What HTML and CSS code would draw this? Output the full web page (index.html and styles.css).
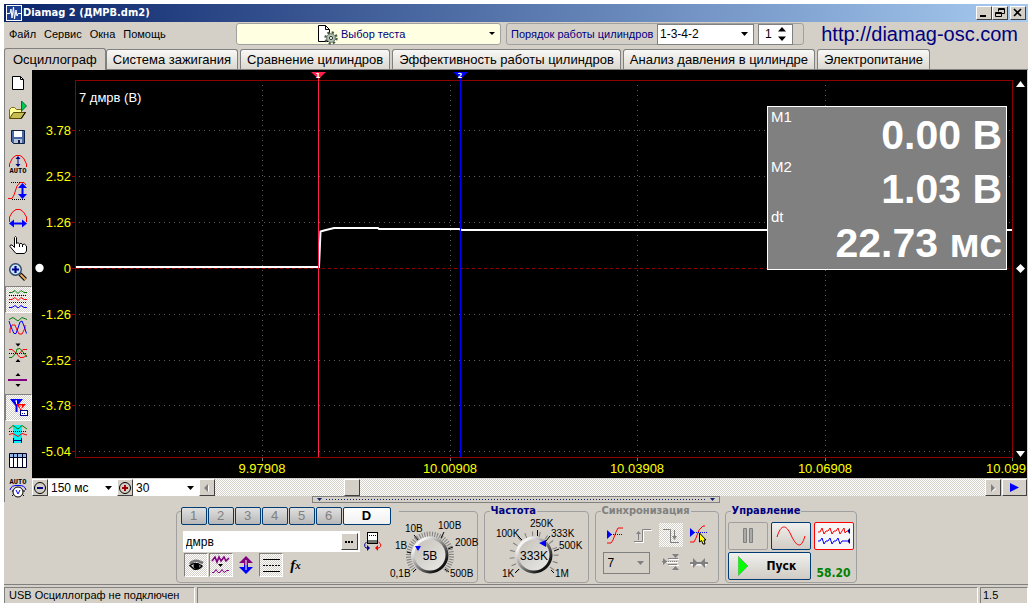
FILE: index.html
```html
<!DOCTYPE html>
<html lang="ru">
<head>
<meta charset="utf-8">
<title>Diamag 2 (ДМРВ.dm2)</title>
<link rel="stylesheet" href="styles.css">
</head>
<body>
<div class="window">
  <header class="titlebar">
    <svg class="app-icon" width="16" height="16" viewBox="0 0 16 16"><rect width="16" height="16" fill="#fff"/><rect x="1" y="1" width="14" height="14" fill="#1c3f94"/><path d="M1 8.500H4L5 4L6 13L7.500 2L8.500 14L10 5L11 11L12 8.500H15" fill="none" stroke="#fff"/></svg>
    <h1 class="title">Diamag 2 (ДМРВ.dm2)</h1>
    <div class="win-buttons">
      <button class="win-btn" aria-label="Свернуть"><svg width="12" height="10"><rect x="2" y="7" width="6" height="2"/></svg></button>
      <button class="win-btn" aria-label="Восстановить"><svg width="12" height="10" fill="none" stroke="#000"><path d="M4.500 3.500V.5H10.500V5.500H8M4 1.500H11M1.500 4.500H7.500V8.500H1.500ZM1 5.500H8"/></svg></button>
      <button class="win-btn win-close" aria-label="Закрыть"><svg width="12" height="10" stroke="#000" stroke-width="1.600"><path d="M2 1L9 8M9 1L2 8"/></svg></button>
    </div>
  </header>

  <div class="menu-row">
    <nav class="menu">
      <button class="menu-item">Файл</button>
      <button class="menu-item">Сервис</button>
      <button class="menu-item">Окна</button>
      <button class="menu-item">Помощь</button>
    </nav>
    <div class="combo test-combo">
      <svg class="test-icon" width="21" height="20" viewBox="0 0 21 20"><path d="M1.500.5H8.500L12.500 4.500V16.500H1.500Z" fill="#fff" stroke="#000"/><path d="M8.500.5V4.500H12.500" fill="none" stroke="#000"/><circle cx="14" cy="13" r="5.500" fill="none" stroke="#4a5a4a" stroke-width="2.400" stroke-dasharray="2.200 2.120"/><circle cx="14" cy="13" r="4.300" fill="#b4c4b4" stroke="#6a7a6a"/><circle cx="14" cy="13" r="1.600" fill="#fff" stroke="#333"/></svg>
      <select class="test-select" aria-label="Выбор теста"><option>Выбор теста</option></select>
      <svg class="arrow" width="6" height="3"><path d="M0 0H6L3 3Z"/></svg>
    </div>
    <div class="order">
      <label class="order-label" for="order">Порядок работы цилиндров</label>
      <span class="combo order-combo">
        <select id="order" class="order-select"><option>1-3-4-2</option></select>
        <svg class="arrow" width="7" height="4"><path d="M0 0H7L3.500 4Z"/></svg>
      </span>
      <span class="spin">
        <input class="spin-input" type="text" value="1" aria-label="Номер цилиндра">
        <svg class="spin-arrows" width="8" height="14"><path d="M0 4.500L4 0L8 4.500ZM0 9.500L4 14L8 9.500Z"/></svg>
      </span>
    </div>
    <a class="site" href="#">http://diamag-osc.com</a>
  </div>

  <nav class="tabs" role="tablist">
    <button class="tab active" role="tab" aria-selected="true">Осциллограф</button>
    <button class="tab" role="tab">Система зажигания</button>
    <button class="tab" role="tab">Сравнение цилиндров</button>
    <button class="tab" role="tab">Эффективность работы цилиндров</button>
    <button class="tab" role="tab">Анализ давления в цилиндре</button>
    <button class="tab" role="tab">Электропитание</button>
  </nav>

  <main class="main">
    <div class="toolbar">
      <button class="tool" aria-label="Новый"><svg viewBox="0 0 20 20"><path d="M4.500 3.500H12.500L15.500 6.500V16.500H4.500Z" fill="#fff" stroke="#000"/><path d="M12.500 3.500V6.500H15.500" fill="none" stroke="#000"/></svg></button>
      <button class="tool" aria-label="Открыть"><svg viewBox="0 0 20 20"><path d="M1.500 18V9.500L3.500 7.500H6.500L8.500 9.500H13.500V12" fill="#ffff9c" stroke="#7b6b10"/><path d="M1.500 18.500L5.500 12.500H17.500L13.500 18.500Z" fill="#c6bd52" stroke="#5a4a00"/><path d="M13 18.500L17.500 12" stroke="#000" fill="none"/><path d="M13.500 11V1L18.500 6Z" fill="#0c4" stroke="#064"/></svg></button>
      <button class="tool" aria-label="Сохранить"><svg viewBox="0 0 20 20"><path d="M3.500 3.500H16.500V16.500H5.500L3.500 14.500Z" fill="#4868a8" stroke="#102040"/><path d="M6 4H14V10H6Z" fill="#fff"/><path d="M6 12H14V16H6Z" fill="#b8c4dc"/><path d="M10 13H12V16H10Z" fill="#102040"/></svg></button>
      <button class="tool" aria-label="Авто амплитуда"><svg viewBox="0 0 20 20"><path d="M1.500 13V10L4.500 4L8 1.500H12L15.500 4L18.500 10V13" fill="none" stroke="red"/><path d="M10 4V12" stroke="#008"/><path d="M7.500 5L10 2L12.500 5ZM7.500 10L10 13L12.500 10Z" fill="#008"/><text class="micro" x="10" y="19">AUTO</text></svg></button>
      <button class="tool" aria-label="Амплитуда"><svg viewBox="0 0 20 20"><path d="M0 17.500H4L6 14L9 5L12 1.500H16L18 4" fill="none" stroke="red"/><path d="M3 1.500H12M4 18.500H18" stroke="#000" stroke-dasharray="1 1"/><path d="M14.500 4V16" stroke="#00f" stroke-width="2"/><path d="M10 7L14.500 2L19 7ZM10 13L14.500 18L19 13Z" fill="#00f"/></svg></button>
      <button class="tool" aria-label="Ширина"><svg viewBox="0 0 20 20"><path d="M1.500 14V9L4.500 4L8 1.500H12L15.500 4L18.500 9V14" fill="none" stroke="red"/><path d="M4 15.500H16" stroke="#00f" stroke-width="2"/><path d="M6 11.500L1 15.500L6 19.500ZM14 11.500L19 15.500L14 19.500Z" fill="#00f"/></svg></button>
      <button class="tool" aria-label="Рука"><svg viewBox="0 0 20 20"><path d="M6.500 12.500V2.500Q7.500 .5 8.500 2.500V8.500Q10 6.500 11.500 9Q13 7 14.500 9.500Q16.500 8 18.500 11V16L16.500 18.500H8L2 11.500Q1.500 9.500 4 10Z" fill="#fff" stroke="#000"/><path d="M11.500 9V12M14.500 9.500V12" stroke="#000"/></svg></button>
      <button class="tool" aria-label="Лупа"><svg viewBox="0 0 20 20"><path d="M12 12L17.500 17.500" stroke="#000" stroke-width="4"/><path d="M12.500 12.500L17.500 17.500" stroke="#e8b060" stroke-width="2"/><circle cx="7.500" cy="7.500" r="5.800" fill="#c0e8ff" stroke="#346" stroke-width="1.400"/><path d="M7.500 4V11M4 7.500H11" stroke="#008" stroke-width="2.200"/></svg></button>
      <button class="tool pressed" aria-label="Раздельно"><svg viewBox="0 0 20 20" fill="none"><path d="M1 3.500H4L7 1.500L10 4.500L13 1.500L16 3.500H19" stroke="green"/><path d="M1 6.500H19M1 13.500H19" stroke="#000" stroke-dasharray="1 1"/><path d="M1 10.500H4L7 8.500L10 11.500L13 8.500L16 10.500H19" stroke="red"/><path d="M1 18.500H4L7 16.500L10 19L13 16.500L16 18.500H19" stroke="#00f"/></svg></button>
      <button class="tool" aria-label="Наложение"><svg viewBox="0 0 20 20" fill="none"><path d="M1 3.500L5 1.500L10 5L14 1.500L19 3.500" stroke="green"/><path d="M2 17V13L4 9H7L9 14L11 18H14L17 12V9" stroke="red"/><path d="M1 5L3 11L6 17.500H8L10 12L12 6L14 5L16 10L18.500 17.500" stroke="#00f"/></svg></button>
      <button class="tool" aria-label="Инверсия"><svg viewBox="0 0 20 20" fill="none"><path d="M7.500.5H12.500L10 3.500ZM7.500 19L10 16L12.500 19Z" fill="#000"/><path d="M1 6.500H4L8 10L12 14.500H15L19 12.500" stroke="red"/><path d="M1 14.500H4L8 10L9 6L12 5.500L15 9L19 14" stroke="green"/><path d="M11 11L15 6.500H19" stroke="red"/><path d="M1 10.500H19" stroke="#000" stroke-dasharray="1 1"/></svg></button>
      <button class="tool" aria-label="Центр"><svg viewBox="0 0 20 20"><path d="M7.500 6L10 3L12.500 6ZM7.500 14H12.500L10 17Z"/><path d="M0 10H19" stroke="#800080" stroke-width="2"/></svg></button>
      <button class="tool pressed" aria-label="Маркеры"><svg viewBox="0 0 20 20"><path d="M2 2H15L9.500 9V15H7.500V9Z" fill="#00f"/><path d="M8 7H18L13.500 12V17H12V12Z" fill="red"/><path d="M7 4.500L8.500 3.500V7M11 9H14L12 11H14" stroke="#fff" fill="none"/><rect x="12.500" y="13.500" width="7" height="5" fill="#fff" stroke="#008"/><path d="M14 16.500H18" stroke="#008" stroke-dasharray="1 1"/></svg></button>
      <button class="tool" aria-label="Фрагмент"><svg viewBox="0 0 20 20" fill="none"><rect x="5" y="1" width="9" height="18" fill="#00f0f8"/><path d="M1 5L5 1.500L10 5L14 1.500L19 5" stroke="green"/><path d="M1 7.500H19" stroke="#000" stroke-dasharray="1 1"/><path d="M1 10.500L5 9.500L10 12.500L14 9.500L19 11" stroke="red"/><path d="M5.500 14V19M13.500 14V19M6 16.500H13" stroke="#008"/></svg></button>
      <button class="tool" aria-label="Таблица"><svg viewBox="0 0 20 20"><path d="M1.500 2.500H18.500V16.500H1.500Z" fill="#fff" stroke="#002"/><path d="M2 3H18V6H2Z" fill="#90b8e8"/><path d="M2 6.500H18M5.500 3V16M9.500 3V16M14.500 3V16" stroke="#002"/></svg></button>
      <button class="tool" aria-label="Авто вольтметр"><svg viewBox="0 0 20 20"><text class="micro" x="10" y="6">AUTO</text><circle cx="10" cy="14" r="5" fill="#fff" stroke="#000"/><path d="M8 12L10 16L12 12M2 12Q3 7 10 7.500Q17 7 18 12" fill="none" stroke="#00f"/><path d="M4 18L5.500 16.500M16 18L14.500 16.500M4 13H5M15 13H17" stroke="#000"/></svg></button>
    </div>

    <div class="workspace">
      <div class="chart">
        <svg class="plot" viewBox="0 0 995 408">
          <g class="grid">
            <path d="M47 60.500H980M47 106.500H980M47 152.500H980M47 244.500H980M47 290.500H980M47 335.500H980M47 381.500H980"/>
            <path d="M230.500 15V387M418.500 15V387M605.500 15V387M793.500 15V387"/>
          </g>
          <path class="frame" d="M43.500 10.500H980.500V387.500H43.500ZM40 60.500H43M40 106.500H43M40 152.500H43M40 198.500H43M40 244.500H43M40 290.500H43M40 335.500H43M40 381.500H43"/>
          <path class="zero" d="M44 198.500H980"/>
          <path class="ticks" d="M230.500 388V391M418.500 388V391M605.500 388V391M793.500 388V391M980.500 388V391"/>
          <path class="signal" d="M44 197H287L288.500 161.500L292 160.500L302 158H346L347 159H427L430 160H980"/>
          <path d="M286.500 8V387" stroke="#ff2050"/><path d="M279 2H294L286.500 9Z" fill="#ff2050"/>
          <path d="M428.500 8V387" stroke="#00f"/><path d="M421 2H436L428.500 9Z" fill="#00f"/>
          <g class="marker-labels"><text x="286" y="8">1</text><text x="428" y="8">2</text></g>
          <g class="y-labels"><text x="39" y="65">3.78</text><text x="39" y="111">2.52</text><text x="39" y="157">1.26</text><text x="39" y="203">0</text><text x="39" y="249">-1.26</text><text x="39" y="295">-2.52</text><text x="39" y="340">-3.78</text><text x="39" y="386">-5.04</text></g>
          <g class="x-labels"><text x="230" y="403">9.97908</text><text x="418" y="403">10.00908</text><text x="605" y="403">10.03908</text><text x="793" y="403">10.06908</text><text x="974" y="403">10.099</text></g>
          <text class="channel" x="47" y="32">7 дмрв (В)</text>
          <path d="M984 17L988.500 11L993 17ZM984 381H993L988.500 387ZM988.500 194L993 198.500L988.500 203L984 198.500Z" fill="#fff"/>
          <circle cx="7.500" cy="198" r="4.200" fill="#fff"/>
        </svg>
        <div class="readout">
          <div class="readout-names"><span>M1</span><span>M2</span><span>dt</span></div>
          <div class="readout-values"><span>0.00 В</span><span>1.03 В</span><span>22.73 мс</span></div>
        </div>
      </div>
      <div class="scroll-row">
        <button class="raised zoom-btn" aria-label="Уменьшить"><svg width="14" height="14"><circle cx="7" cy="7" r="5.500" fill="none" stroke="#000"/><path d="M4 7H10" stroke="#008" stroke-width="2"/></svg></button>
        <span class="combo time-combo"><select class="flat-select" aria-label="Развёртка"><option>150 мс</option></select><svg class="arrow" width="7" height="4"><path d="M0 0H7L3.500 4Z"/></svg></span>
        <button class="raised zoom-btn" aria-label="Увеличить"><svg width="14" height="14"><circle cx="7" cy="7" r="5.500" fill="none" stroke="#000"/><path d="M4 7H10M7 4V10" stroke="#a00000" stroke-width="2"/></svg></button>
        <span class="combo scale-combo"><select class="flat-select" aria-label="Масштаб"><option>30</option></select><svg class="arrow" width="7" height="4"><path d="M0 0H7L3.500 4Z"/></svg></span>
        <button class="raised zoom-btn" aria-label="Влево"><svg width="8" height="8"><path d="M6 1V8L2 4.500Z" fill="#fff"/><path d="M5 0V8L1 4Z" fill="#808080"/></svg></button>
        <input class="scroll" type="range" min="0" max="1000" value="171" aria-label="Прокрутка">
        <button class="raised zoom-btn" aria-label="Вправо"><svg width="8" height="8"><path d="M3 1V8L7 5Z" fill="#fff"/><path d="M2 0V8L6 4Z" fill="#808080"/></svg></button>
        <button class="raised play-btn" aria-label="Воспроизвести"><svg width="9" height="9"><path d="M0 0L9 4.500L0 9Z" fill="#00f"/></svg></button>
      </div>
    </div>
  </main>

  <div class="splitter"><svg width="5" height="3"><path d="M0 0H5L2.500 3Z"/></svg><span class="dots"></span><svg width="5" height="3"><path d="M0 0H5L2.500 3Z"/></svg></div>

  <section class="panel">
    <div class="group channel-group">
      <div class="channel-left">
        <div class="channels">
          <button class="ch">1</button><button class="ch">2</button><button class="ch">3</button><button class="ch">4</button><button class="ch">5</button><button class="ch">6</button><button class="ch digital">D</button>
        </div>
        <div class="name-row">
          <div class="name-box"><input class="name-input" type="text" value="дмрв" aria-label="Название канала"><button class="raised more" aria-label="Выбрать"><svg width="8" height="2"><path d="M0 0H2V2H0ZM3 0H5V2H3ZM6 0H8V2H6Z"/></svg></button></div>
          <button class="plain" aria-label="Датчик"><svg width="20" height="20" viewBox="0 0 20 20"><rect x="4.500" y=".5" width="10" height="11" fill="#fff" stroke="#000"/><rect x="5" y="8" width="9" height="3" fill="#707870"/><path d="M6 3.500H13" stroke="#000" stroke-dasharray="1 1"/><path d="M3.500 10Q0 13 3 16H5" fill="none" stroke="#008"/><path d="M4 13L7 16L4 19Z" fill="#008"/><path d="M15.500 10Q20 13 16 16H14" fill="none" stroke="red"/><path d="M15 13L12 16L15 19Z" fill="red"/></svg></button>
        </div>
        <div class="icon-row">
          <button class="toggle on" aria-label="Показать"><svg width="20" height="20" viewBox="0 0 20 20"><path d="M4 9Q7 5 12 6L17 8" stroke="#777" stroke-width="2.500" fill="none"/><path d="M4 10.500Q10 6 16 11Q13 15 8 14Z" fill="#ddd" stroke="#000" stroke-width="1.400"/><circle cx="10.500" cy="11" r="3" fill="#000"/></svg></button>
          <button class="toggle on" aria-label="Фильтр"><svg width="20" height="20" viewBox="0 0 20 20"><path d="M1 6L4 2L6 7L8 2L10 6L13 2L15 6L18 3" stroke="#800080" stroke-width="1.600" fill="none"/><path d="M1 17.500H3L5 14.500L7 17.500H9L11 14.500L13 17.500L16 15.500H18" stroke="#800080" fill="none"/><path d="M7 9H12L9.500 12Z"/></svg></button>
          <button class="toggle" aria-label="Смещение"><svg width="20" height="20" viewBox="0 0 20 20"><path d="M10 1L17 8H12V10H8V8H3Z" fill="#800080"/><path d="M10 19L17 12H12V10H8V12H3Z" fill="#00f"/><path d="M10 5V15" stroke="#fff"/></svg></button>
          <button class="toggle on" aria-label="Линии"><svg width="20" height="20" viewBox="0 0 20 20"><path d="M2 4.500H19M2 16.500H19" stroke="#000"/><path d="M2 10.500H19" stroke="#000" stroke-dasharray="2 1"/></svg></button>
          <button class="toggle fx" aria-label="Функция">f<sub>x</sub></button>
        </div>
      </div>
      <svg class="dial" width="92" height="70" viewBox="0 0 92 70">
        <path d="M28 59A21.500 21.500 0 1 1 58 59" fill="none" stroke="#808080" stroke-width="5" stroke-dasharray="1 1.500"/>
        <path d="M29 57L26 60M20 40L24 41M27 23L31 28M57 20L54 26M66 35L61 37M58 57L62 60" stroke="#000"/>
        <use href="#knob" x="43" y="43"/><path d="M28 34H34L31 39Z" fill="#00f"/>
        <text x="3" y="65">0,1В</text><text x="8" y="37">1В</text><text x="18" y="20">10В</text><text x="51" y="17">100В</text><text x="68" y="34">200В</text><text x="63" y="65">500В</text>
        <text class="knob-value" x="43" y="48">5В</text>
      </svg>
    </div>

    <fieldset class="group freq-group">
      <legend>Частота</legend>
      <svg class="dial" width="104" height="65" viewBox="0 5 104 65">
        <defs>
          <linearGradient id="rim" x1="0" y1="0" x2="1" y2="1"><stop offset=".2" stop-color="#f4f4f4"/><stop offset=".5" stop-color="#888"/><stop offset=".8" stop-color="#111"/></linearGradient>
          <linearGradient id="face" x1="0" y1="0" x2="1" y2="1"><stop offset="0" stop-color="#c4c0b8"/><stop offset=".8" stop-color="#e4e2de"/></linearGradient>
          <g id="knob"><circle r="18.500" fill="url(#rim)"/><circle r="15.500" fill="url(#face)"/></g>
        </defs>
        <path d="M33 59A22 22 0 1 1 65 59" fill="none" stroke="#808080" stroke-width="5" stroke-dasharray="1 6"/>
        <path d="M34 57L30 61M33 24L37 28M52.500 18V24M65 24L61 29M74 37L69 39M66 58L69 61" stroke="#000"/>
        <use href="#knob" x="49" y="43"/><path d="M54 31L61 28V35Z" fill="#00f"/>
        <text x="17" y="65">1K</text><text x="11" y="25">100K</text><text x="45" y="15">250K</text><text x="66" y="25">333K</text><text x="74" y="37">500K</text><text x="70" y="65">1M</text>
        <text class="knob-value" x="49" y="48">333K</text>
      </svg>
    </fieldset>

    <fieldset class="group sync-group">
      <legend class="muted">Синхронизация</legend>
      <div class="sync-grid">
        <button class="sync" aria-label="Уровень"><svg width="20" height="20" viewBox="0 0 20 20"><path d="M2 18H6L8 15L11 7L13 3H18" fill="none" stroke="red"/><path d="M2 9.500H18" stroke="#00f" stroke-dasharray="1 1"/><path d="M2 5V14L7 9.500Z" fill="#00f"/></svg></button>
        <button class="sync" aria-label="По фронту" disabled><svg width="20" height="20" viewBox="0 0 20 20"><path d="M2 17.500H10.500V5.500H19" fill="none" stroke="#fff"/><path d="M1 16.500H9.500V4.500H18M5.500 15V8" fill="none" stroke="#808080"/><path d="M3 9L5.500 6L8 9Z" fill="#808080"/></svg></button>
        <button class="sync chosen" aria-label="По спаду"><svg width="20" height="20" viewBox="0 0 20 20"><path d="M2 4.500H9.500V17.500H18M13.500 5V12" fill="none" stroke="#808080"/><path d="M11 11L13.500 15L16 11Z" fill="#808080"/></svg></button>
        <button class="sync" aria-label="Указать"><svg width="20" height="20" viewBox="0 0 20 20"><path d="M1 17H5L7 13L10 5L14 1H16" fill="none" stroke="red"/><path d="M1 7.500H19" stroke="#00f" stroke-dasharray="1 1"/><path d="M1 3V12L6 7.500Z" fill="#00f"/><path d="M10.500 8V17L12.500 15.500L14 19H16L15 15H17Z" fill="#ff0" stroke="#000"/></svg></button>
        <span class="combo sync-combo"><select class="sync-select" aria-label="Канал синхронизации"><option>7</option></select><svg class="arrow" width="7" height="4"><path d="M0 0H7L3.500 4Z" fill="#808080"/></svg></span>
        <button class="sync" aria-label="Гистерезис" disabled><svg width="20" height="20" viewBox="0 0 20 20"><path d="M8 6.500H18M6 9.500H17M8 12.500H18" fill="none" stroke="#fff"/><path d="M7 5.500H17M7 11.500H16M1 8.500H6" stroke="#808080"/><path d="M7 8.500H17" stroke="#808080" stroke-dasharray="1 1"/><path d="M2 5V12L6 8.500ZM11 1H18L14.500 5ZM11 17H18L14.500 13Z" fill="#808080"/></svg></button>
        <button class="sync" aria-label="Сжать" disabled><svg width="20" height="20" viewBox="0 0 20 20"><path d="M2 11.500H18" stroke="#fff" stroke-width="2"/><path d="M1 10H19" stroke="#808080" stroke-width="2"/><path d="M4 5V15L9 10ZM16 5V15L11 10Z" fill="#808080"/></svg></button>
      </div>
    </fieldset>

    <fieldset class="group control-group">
      <legend>Управление</legend>
      <div class="control-grid">
        <button class="ctl" aria-label="Пауза" disabled><svg width="14" height="16"><path d="M2.500.5H5.500V14.500H2.500ZM8.500.5H11.500V14.500H8.500Z" fill="#aaa" stroke="#808080"/></svg></button>
        <button class="ctl blue" aria-label="Синус"><svg width="30" height="20"><path d="M1 11C5 -2 10 -2 15 9S25 24 29 10" fill="none" stroke="red"/></svg></button>
        <button class="ctl red" aria-label="Сигналы"><svg width="34" height="20"><path d="M1 6H3L5 2L7 8L9 5H11L13 2L15 8L17 5H19L21 2L23 8L25 5L27 2L28 7L30 5" fill="none" stroke="red"/><path d="M1 15H3L5 12L7 18L9 15H11L13 12L15 18L17 15H19L21 12L23 18L25 15H30" fill="none" stroke="#00f"/><path d="M33 2V8L30 5ZM33 12V18L30 15Z" fill="#008"/></svg></button>
        <button class="ctl blue start"><svg width="10" height="20"><path d="M0 0L10 10L0 20Z" fill="#0f0" stroke="#8a8"/></svg><span>Пуск</span></button>
        <output class="counter">58.20</output>
      </div>
    </fieldset>
  </section>

  <footer class="status">
    <span class="status-cell status-text">USB Осциллограф не подключен</span>
    <span class="status-cell status-fill"></span>
    <span class="status-cell status-version">1.5</span>
  </footer>
</div>
</body>
</html>
```
FILE: styles.css
```css
* { box-sizing: border-box; }
body {
  margin: 0;
  padding: 4px 4px 5px;
  background: #fff;
  font: 11px/14px "Liberation Sans", Arial, sans-serif;
  color: #000;
}
button, input, select { font: inherit; color: inherit; margin: 0; padding: 0; border: 0; border-radius: 0; background: none; }
button { display: flex; align-items: center; justify-content: center; }
select { appearance: none; }
svg { display: block; flex: none; }

.window { display: flex; flex-direction: column; min-height: calc(100vh - 9px); background: #d4d0c8; }

.titlebar { display: flex; align-items: center; height: 18px; padding: 0 2px; background: linear-gradient(90deg, #0a246a, #a6caf0); }
.title { flex: 1; margin: 0 0 0 1px; font-family: "DejaVu Sans Condensed", "DejaVu Sans", sans-serif; font-size: 11px; color: #fff; }
.win-buttons { display: flex; }
.win-btn { width: 16px; height: 14px; background: #d4d0c8; border: 1px solid; border-color: #fff #404040 #404040 #fff; }
.win-close { margin-left: 2px; }

.menu-row { display: flex; align-items: center; height: 26px; padding: 0 10px 2px 5px; }
.menu { display: flex; gap: 8px; width: 227px; }
.combo { position: relative; display: flex; }
.combo select { width: 100%; }
.arrow { position: absolute; right: 5px; top: calc(50% - 2px); pointer-events: none; }
.test-combo { flex: 0 1 265px; height: 22px; border: 1px solid #a0a0a0; border-radius: 3px; background: #ffffe1; }
.test-select { padding-left: 104px; color: #000080; }
.test-icon { position: absolute; left: 80px; top: 1px; pointer-events: none; }
.order { display: flex; align-items: center; height: 22px; margin-left: 5px; padding: 0 10px 0 4px; border: 1px solid #a0a0a0; border-radius: 3px; }
.order-label { width: 146px; white-space: nowrap; color: #000080; }
.order-combo { width: 97px; height: 21px; border: 1px solid #808080; background: #fff; }
.order-select { padding-left: 2px; font-size: 12px; }
.spin { display: flex; align-items: center; width: 35px; height: 21px; margin-left: 4px; padding: 0 6px; border: 1px solid #808080; background: #fff; }
.spin-input { flex: 1; width: 0; font-size: 12px; }
.site { margin-left: auto; font-size: 20px; line-height: 22px; color: #000080; text-decoration: none; }

.tabs { display: flex; align-items: flex-end; gap: 2px; height: 22px; border-bottom: 1px solid #808080; }
.tab { height: 20px; padding: 0 6px; font-size: 13px; line-height: 18px; white-space: nowrap; border: 1px solid #808080; border-bottom: 0; border-radius: 3px 3px 0 0; background: linear-gradient(#f8f8f6, #dcd8d0); }
.tab.active { height: 22px; margin: 0 -2px -1px 0; padding: 0 8px; background: #d4d0c8; }

.main { display: flex; flex: 1; }
.toolbar { display: flex; flex-direction: column; width: 28px; margin-bottom: -6px; border-left: 1px solid #808080; }
.tool { height: 27px; padding: 0 2px 2px 0; border: 1px solid transparent; }
.tool svg { width: 20px; height: 20px; overflow: visible; }
.pressed, .on { border: 1px solid; border-color: #808080 #fff #fff #808080; }
.pressed, .on, .chosen { background: repeating-conic-gradient(#fff 0 25%, #d4d0c8 0 50%) 0 0 / 2px 2px; }
.micro { font: bold 7px "Liberation Mono", monospace; text-anchor: middle; }
.workspace { display: flex; flex: 1; flex-direction: column; min-width: 0; }

.chart { position: relative; flex: 1; background: #000; margin-right: 1px; }
.plot { width: 100%; height: auto; font-size: 13px; }
.grid path { fill: none; stroke: #5c5c5c; stroke-dasharray: 1 4; }
.frame { fill: none; stroke: #900000; }
.zero { stroke: #900000; stroke-dasharray: 3 3; }
.ticks { stroke: #808080; }
.signal { fill: none; stroke: #fff; stroke-width: 2; }
.marker-labels { fill: #fff; font: bold 7px "DejaVu Sans", sans-serif; text-anchor: middle; }
.y-labels { fill: #ff0; text-anchor: end; }
.x-labels { fill: #ff0; text-anchor: middle; }
.channel { fill: #fff; }
.readout { position: absolute; top: 36px; right: 20px; display: flex; justify-content: space-between; width: 240px; height: 164px; padding: 0 4px 0 3px; border: 1px solid #fff; background: #808080; color: #fff; }
.readout-names { display: flex; flex-direction: column; font-size: 15px; line-height: 20px; gap: 30px; }
.readout-values { display: flex; flex-direction: column; text-align: right; font-size: 41px; line-height: 54px; font-weight: bold; padding-top: 1px; }

.scroll-row { display: flex; height: 18px; margin-right: 1px; padding-top: 1px; }
.raised { border: 1px solid; border-color: #fff #404040 #404040 #fff; background: #d4d0c8; }
.zoom-btn { width: 16px; }
.flat-select { padding-left: 3px; background: #fff; font-size: 12px; }
.time-combo { width: 69px; }
.scale-combo { width: 66px; }
.scroll { flex: 1; min-width: 0; appearance: none; background: repeating-conic-gradient(#fff 0 25%, #d4d0c8 0 50%) 0 0 / 2px 2px; }
.scroll::-webkit-slider-thumb { appearance: none; width: 16px; height: 17px; border: 1px solid; border-color: #fff #404040 #404040 #fff; background: #d4d0c8; }
.play-btn { width: 25px; margin-left: 1px; }

.splitter { display: flex; align-items: center; align-self: center; gap: 4px; width: 408px; height: 7px; padding: 0 4px; border: 1px solid #808080; fill: #0a246a; }
.dots { flex: 1; height: 1px; background: repeating-linear-gradient(90deg, #0a246a 0 1px, transparent 1px 3px); }

.panel { display: flex; justify-content: center; gap: 6px; padding: 2px 0 1px; }
.group { min-width: 0; margin: 0; padding: 0; border: 1px solid #a0a0a0; border-radius: 4px; }
legend, .start, .counter { font-family: "DejaVu Sans Condensed", "DejaVu Sans", sans-serif; font-weight: bold; }
legend { margin-left: 5px; padding: 0 1px; line-height: 12px; color: #000080; }
.muted { color: #808080; }
.channel-group { display: flex; justify-content: space-between; width: 302px; margin-top: 6px; }
.freq-group { width: 105px; }
.sync-group { width: 124px; }
.control-group { width: 132px; }

.channel-left { padding-left: 4px; }
.channels { display: flex; gap: 1px; width: 218px; margin: -5px -12px 0 0; background: #d4d0c8; }
.ch { width: 26px; height: 18px; border: 1px solid #003c74; border-radius: 2px; background: linear-gradient(#e0e0e0, #b8b8b8); font-size: 13px; color: #808080; }
.ch.digital { width: 48px; background: linear-gradient(#fff, #f0f0f0); color: #000; font-weight: bold; }
.name-row { display: flex; align-items: center; gap: 3px; margin: 6px 0 0 2px; }
.name-box { display: flex; align-items: center; width: 177px; height: 21px; padding: 2px 2px 2px 3px; background: #fff; }
.name-input { flex: 1; min-width: 0; font-size: 12px; }
.more { width: 17px; height: 17px; }
.icon-row { display: flex; gap: 1px; margin: 1px 0 0 3px; }
.toggle { width: 24px; height: 24px; }
.fx { font: italic bold 15px "Liberation Serif", serif; }
.fx sub { font-size: 11px; }
.dial { font-size: 10px; overflow: visible; }
.knob-value { font-size: 12px; text-anchor: middle; }

.sync-grid { display: grid; grid-template-columns: repeat(4, 28px); grid-template-rows: 24px 22px; gap: 5px 0; padding: 6px 0 0 5px; }
.sync { justify-self: center; width: 24px; }
.sync-combo { grid-column: span 2; width: 47px; margin-left: 2px; border: 1px solid #808080; }
.sync-select { padding-left: 4px; font-size: 12px; }

.control-grid { display: grid; grid-template-columns: repeat(3, 40px); grid-template-rows: 28px 28px; gap: 2px 3px; padding: 5px 2px 2px; }
.ctl { border: 1px solid #a0a0a0; border-radius: 2px; }
.ctl.blue { border-color: #003c74; background: linear-gradient(#f0f0ee, #d0ccc4); }
.ctl.red { border: 1px solid red; background: #f6f6f6; }
.ctl.start { grid-column: span 2; justify-content: flex-start; gap: 19px; padding-left: 9px; font-size: 12px; }
.counter { align-self: end; text-align: center; font-size: 12px; color: #008000; }

.status { display: flex; gap: 2px; padding-top: 2px; border-top: 1px solid #808080; }
.status-cell { height: 16px; padding: 0 4px; border-top: 1px solid #808080; border-left: 1px solid #808080; border-right: 1px solid #fff; }
.status-text { width: 191px; white-space: nowrap; }
.status-fill { flex: 1; }
.status-version { width: 48px; padding: 0 2px; }
```
